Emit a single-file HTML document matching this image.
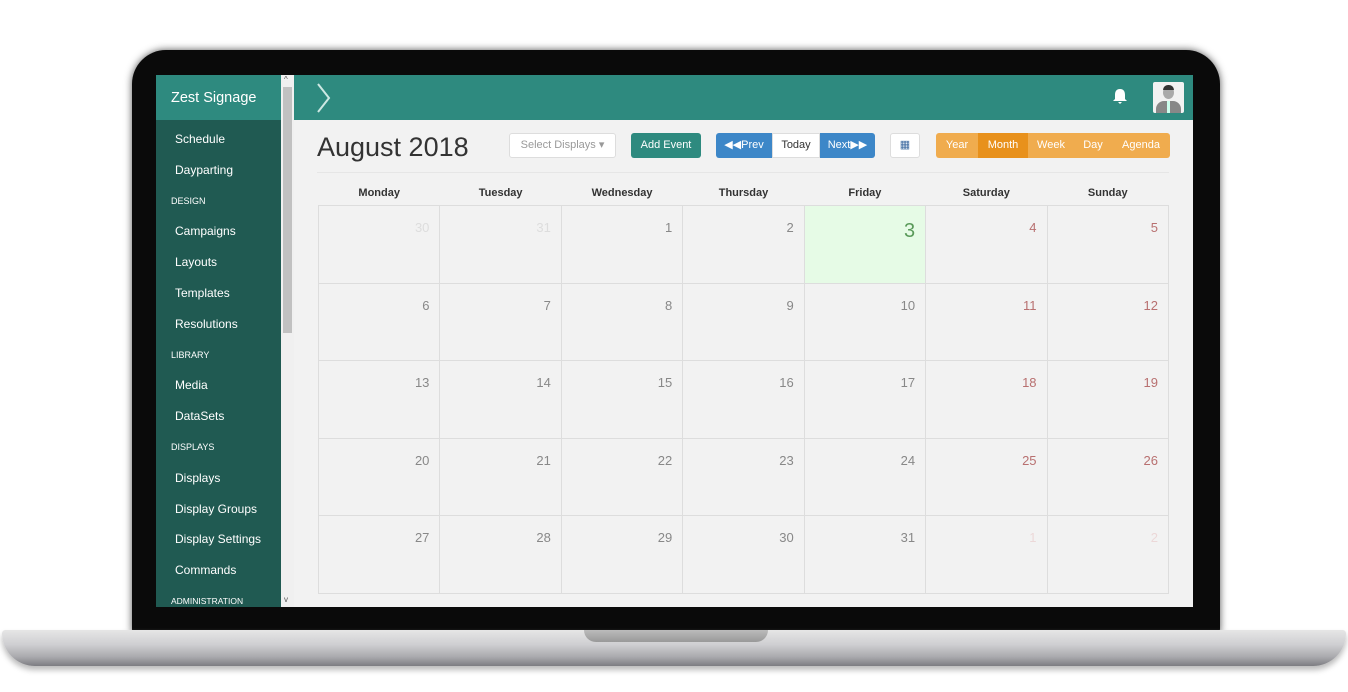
<!DOCTYPE html>
<html><head><style>
*{box-sizing:border-box;margin:0;padding:0}
body{width:1348px;height:692px;background:#fff;position:relative;overflow:hidden;font-family:"Liberation Sans",sans-serif}
.bezel{position:absolute;left:132px;top:50px;width:1088px;height:585px;background:#0a0a0a;border-radius:34px 34px 6px 6px;box-shadow:0 0 8px #555}
.base{position:absolute;left:2px;top:630px;width:1344px;height:36px;border-radius:4px 4px 40px 40px;background:linear-gradient(#e6e6e6,#cfcfd2 40%,#a9a9ad 75%,#7d7d82);box-shadow:0 4px 6px #bbb}
.notch{position:absolute;left:584px;top:630px;width:184px;height:12px;background:linear-gradient(#bbb,#999);border-radius:0 0 12px 12px}
.screen{position:absolute;left:156px;top:75px;width:1037px;height:532px;background:#f2f2f2;overflow:hidden}
.side{position:absolute;left:0;top:0;width:125px;height:532px;background:#205a52;color:#fff}
.brand{height:45px;background:#2e8a7f;font-size:14.5px;padding:15px 0 0 15px}
.side a{display:block;font-size:12px;padding-left:19px;height:30.8px;line-height:31px}
.side h6{font-size:9px;font-weight:normal;padding-left:15px;height:30.8px;line-height:31px}
.sb{position:absolute;left:125px;top:0;width:13px;height:532px;background:#f0f0f0}
.sb i{position:absolute;left:2px;top:12px;width:9px;height:246px;background:#c1c1c1}
.top{position:absolute;left:138px;top:0;width:899px;height:45px;background:#2e8a7f}
h1{position:absolute;left:161px;top:57px;font-weight:normal;font-size:27px;color:#333}
.btn{position:absolute;top:58px;height:25px;font-size:11px;line-height:25px;text-align:center;border-radius:3px}
table{position:absolute;left:162px;top:112px;width:851px;border-collapse:collapse;table-layout:fixed}
th{font-size:11px;color:#333;height:12px;line-height:12px;padding-bottom:6px}
td{border:1px solid #ddd;height:77.6px;vertical-align:top;text-align:right;padding:14px 10px 0 0;font-size:13px;color:#888}
.o{color:#ddd}.w{color:#b87070}.wo{color:#ecd8d8}
</style></head><body>
<div class="bezel"></div>
<div class="base"></div><div class="notch"></div>
<div class="screen">
<div class="side">
<div class="brand">Zest Signage</div>
<a style="margin-top:4px">Schedule</a><a>Dayparting</a><h6>DESIGN</h6><a>Campaigns</a><a>Layouts</a><a>Templates</a><a>Resolutions</a><h6>LIBRARY</h6><a>Media</a><a>DataSets</a><h6>DISPLAYS</h6><a>Displays</a><a>Display Groups</a><a>Display Settings</a><a>Commands</a><h6 style="font-size:8.5px">ADMINISTRATION</h6>
</div>
<div class="sb"><i></i><span style="position:absolute;left:3px;top:0;font-size:8px;color:#555">^</span><span style="position:absolute;left:3px;top:520px;font-size:8px;color:#555">v</span></div>
<div class="top">
<svg style="position:absolute;left:22px;top:8px" width="16" height="30"><path d="M2 1 L13 15 L2 29" stroke="#cde8e3" stroke-width="2" fill="none"/></svg>
<svg style="position:absolute;left:818px;top:13px" width="16" height="17"><path d="M8 1 C4 1 3 4 3 7 L3 11 L1 13 L15 13 L13 11 L13 7 C13 4 12 1 8 1Z M6 14 L10 14 L8 16Z" fill="#fff"/></svg>
<div style="position:absolute;left:859px;top:7px;width:31px;height:31px;background:#f2f2f2;border-radius:2px;overflow:hidden">
<div style="position:absolute;left:10px;top:4px;width:11px;height:13px;background:#aaa;border-radius:50%"></div>
<div style="position:absolute;left:10px;top:3px;width:11px;height:5px;background:#333;border-radius:5px 5px 0 0"></div>
<div style="position:absolute;left:3px;top:19px;width:25px;height:14px;background:#888;border-radius:8px 8px 0 0"></div>
<div style="position:absolute;left:14px;top:19px;width:3px;height:12px;background:#cfe"></div></div>
</div>
<h1>August 2018</h1>
<div class="btn" style="left:353px;width:107px;background:#fff;border:1px solid #ddd;color:#999;line-height:23px">Select Displays ▾</div>
<div class="btn" style="left:475px;width:70px;background:#2e8a7f;color:#fff">Add Event</div>
<div class="btn" style="left:560px;width:56px;background:#3d87c8;color:#fff;border-radius:3px 0 0 3px">◀◀Prev</div>
<div class="btn" style="left:616px;width:48px;background:#fff;color:#333;border-radius:0;border:1px solid #ddd;line-height:23px">Today</div>
<div class="btn" style="left:664px;width:55px;background:#3d87c8;color:#fff;border-radius:0 3px 3px 0">Next▶▶</div>
<div class="btn" style="left:734px;width:30px;background:#fff;border:1px solid #ddd;color:#3d6aa0;line-height:23px">▦</div>
<div class="btn" style="left:780px;width:234px;background:#f0ac4e;color:#fff"></div>
<div class="btn" style="left:780px;width:42px;color:#fff">Year</div>
<div class="btn" style="left:822px;width:50px;background:#e8911c;color:#fff;border-radius:0">Month</div>
<div class="btn" style="left:872px;width:46px;color:#fff">Week</div>
<div class="btn" style="left:918px;width:38px;color:#fff">Day</div>
<div class="btn" style="left:956px;width:58px;color:#fff">Agenda</div>
<div style="position:absolute;left:161px;top:97px;width:852px;height:1px;background:#e6e6e6"></div>
<table>
<tr><th>Monday</th><th>Tuesday</th><th>Wednesday</th><th>Thursday</th><th>Friday</th><th>Saturday</th><th>Sunday</th></tr>
<tr><td class="o">30</td><td class="o">31</td><td>1</td><td>2</td><td style="background:#e6fbe6;color:#5a9a5a;font-size:20px;padding-top:14px">3</td><td class="w">4</td><td class="w">5</td></tr>
<tr><td>6</td><td>7</td><td>8</td><td>9</td><td>10</td><td class="w">11</td><td class="w">12</td></tr>
<tr><td>13</td><td>14</td><td>15</td><td>16</td><td>17</td><td class="w">18</td><td class="w">19</td></tr>
<tr><td>20</td><td>21</td><td>22</td><td>23</td><td>24</td><td class="w">25</td><td class="w">26</td></tr>
<tr><td>27</td><td>28</td><td>29</td><td>30</td><td>31</td><td class="wo">1</td><td class="wo">2</td></tr>
</table>
</div>
</body></html>
